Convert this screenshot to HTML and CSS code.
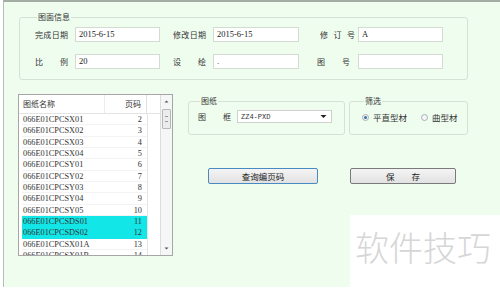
FILE: index.html
```html
<!DOCTYPE html>
<html>
<head>
<meta charset="utf-8">
<link rel="stylesheet" href="styles.css">
</head>
<body>
<div class="window">
  <fieldset class="grp info">
    <legend>图面信息</legend>
    <div class="form">
      <span class="lbl l1 just">完成日期</span><span class="inp">2015-6-15</span>
      <span class="lbl l2 just">修改日期</span><span class="inp">2015-6-15</span>
      <span class="lbl l3 just w35">修订号</span><span class="inp">A</span>
      <span class="lbl l1 just">比例</span><span class="inp">20</span>
      <span class="lbl l2 just">设绘</span><span class="inp">.</span>
      <span class="lbl l3b just">图号</span><span class="inp"></span>
    </div>
  </fieldset>

  <div class="middle">
    <div class="list">
      <div class="table">
        <div class="thead"><span class="c1">图纸名称</span><span class="c2">页码</span><span class="c3"></span></div>
        <div class="row"><span class="c1">066E01CPCSX01</span><span class="c2">2</span><span class="c3"></span></div>
        <div class="row"><span class="c1">066E01CPCSX02</span><span class="c2">3</span><span class="c3"></span></div>
        <div class="row"><span class="c1">066E01CPCSX03</span><span class="c2">4</span><span class="c3"></span></div>
        <div class="row"><span class="c1">066E01CPCSX04</span><span class="c2">5</span><span class="c3"></span></div>
        <div class="row"><span class="c1">066E01CPCSY01</span><span class="c2">6</span><span class="c3"></span></div>
        <div class="row"><span class="c1">066E01CPCSY02</span><span class="c2">7</span><span class="c3"></span></div>
        <div class="row"><span class="c1">066E01CPCSY03</span><span class="c2">8</span><span class="c3"></span></div>
        <div class="row"><span class="c1">066E01CPCSY04</span><span class="c2">9</span><span class="c3"></span></div>
        <div class="row"><span class="c1">066E01CPCSY05</span><span class="c2">10</span><span class="c3"></span></div>
        <div class="row sel"><span class="c1">066E01CPCSDS01</span><span class="c2">11</span><span class="c3"></span></div>
        <div class="row sel"><span class="c1">066E01CPCSDS02</span><span class="c2">12</span><span class="c3"></span></div>
        <div class="row"><span class="c1">066E01CPCSX01A</span><span class="c2">13</span><span class="c3"></span></div>
        <div class="row"><span class="c1">066E01CPCSX01B</span><span class="c2">14</span><span class="c3"></span></div>
      </div>
      <div class="scroll">
        <svg class="arr" width="9" height="9" viewBox="0 0 9 9"><path d="M2.5 5.5 L4.5 3.5 L6.5 5.5 Z" fill="#555"/></svg>
        <div class="thumb"><div class="grip"></div></div>
        <div class="spacer"></div>
        <svg class="arr" width="9" height="9" viewBox="0 0 9 9"><path d="M2.5 3.5 L4.5 5.5 L6.5 3.5 Z" fill="#555"/></svg>
      </div>
    </div>

    <div class="right">
      <div class="groups">
        <fieldset class="grp paper">
          <legend>图纸</legend>
          <div class="prow">
            <span class="lbl just w33">图框</span>
            <div class="combo"><span>ZZ4-PXD</span>
              <svg width="7" height="5" viewBox="0 0 7 5"><path d="M0.5 1 L3.5 4 L6.5 1 Z" fill="#222"/></svg>
            </div>
          </div>
        </fieldset>
        <fieldset class="grp filter">
          <legend>筛选</legend>
          <div class="radios">
            <span class="radio on"></span><span class="rtxt">平直型材</span>
            <span class="radio r2"></span><span class="rtxt">曲型材</span>
          </div>
        </fieldset>
      </div>
      <div class="buttons">
        <button class="btn focus">查询编页码</button>
        <button class="btn save"><span class="just w34">保存</span></button>
      </div>
    </div>
  </div>
</div>
<div class="watermark">软件技巧</div>
</body>
</html>
```
FILE: styles.css
```css
html, body {
  margin: 0;
  padding: 0;
  background: #ffffff;
  width: 500px;
  height: 288px;
  overflow: hidden;
  font-family: "Noto Sans CJK SC", "Liberation Serif", sans-serif;
  color: #222;
}

.window {
  margin-left: 3px;
  height: 275px;
  border-top: 2px solid #a3ada3;
  border-left: 1px solid #b5bfb5;
  background: #effdef;
  padding: 10px 0 0 15px;
}

.grp {
  margin: 0;
  border: 1px solid #d6e0d6;
  border-radius: 3px;
  min-width: 0;
  box-sizing: border-box;
}

.grp legend {
  font-size: 8px;
  line-height: 10px;
  padding: 0 1px;
  margin-left: 2px;
  color: #333;
}

.info {
  width: 449px;
  padding: 5px 0 10px 15px;
}

.form {
  display: grid;
  grid-template-columns: 40px 85px 53px 86px 59px 85px;
  grid-auto-rows: 15px;
  row-gap: 12px;
  align-items: center;
}

.lbl {
  font-size: 8px;
  line-height: 15px;
  color: #333;
}

.just {
  display: inline-block;
  width: 33px;
  text-align: justify;
  text-align-last: justify;
}
.w35 { width: 35px; }
.w33 { width: 33px; }
.w34 { width: 34px; }

.l2 { margin-left: 13px; }
.l3 { margin-left: 21px; }
.l3b { margin-left: 18px; }

.inp {
  height: 15px;
  background: #fff;
  border: 1px solid #d2dcd2;
  box-sizing: border-box;
  font-family: "Liberation Serif", serif;
  font-size: 8.5px;
  line-height: 13px;
  padding-left: 3px;
  color: #222;
}

.middle {
  display: flex;
  margin-top: 14px;
  margin-left: -1px;
}

.list {
  width: 155px;
  height: 162px;
  border: 1px solid #a6a6a6;
  box-sizing: border-box;
  background: #fff;
  display: flex;
  overflow: hidden;
}

.table {
  flex: 1;
  padding-left: 3px;
}

.thead, .row {
  display: grid;
  grid-template-columns: 83px 42px 1fr;
}

.thead {
  height: 19px;
  line-height: 17px;
  font-size: 8px;
  color: #333;
  border-bottom: 1px solid #e4e4e4;
  margin-left: -3px;
  padding-left: 3px;
  box-sizing: border-box;
}
.thead .c1 { border-right: 1px solid #ececec; padding-left: 1px; }
.thead .c2 { border-right: 1px solid #e0e0e0; }

.row {
  height: 11.33px;
  line-height: 11px;
  font-family: "Liberation Serif", serif;
  font-size: 8.3px;
  color: #333;
  box-shadow: inset 0 -1px 0 #f3f3f3;
}

.c1 { padding-left: 1px; white-space: nowrap; overflow: hidden; }
.c2 { text-align: right; padding-right: 5px; }
.row .c3 { border-left: 1px solid #e4e4e4; background: #fff; }

.row.sel .c1, .row.sel .c2 { background: #13e6e6; }

.scroll {
  width: 11px;
  border-left: 1px solid #dcdcdc;
  background: #f6f6f6;
  display: flex;
  flex-direction: column;
  align-items: center;
}
.arr { flex: none; margin-top: 2px; }
.thumb {
  width: 7px;
  height: 18px;
  margin-top: 3px;
  background: #ececec;
  border: 1px solid #b8b8b8;
  border-radius: 1px;
  display: flex;
  align-items: center;
  justify-content: center;
}
.grip { width: 3px; height: 4px; border-top: 1px solid #999; border-bottom: 1px solid #999; }
.spacer { flex: 1; }
.scroll .arr:last-child { margin: 0 0 2px; }

.right {
  margin-left: 15px;
}

.groups {
  display: flex;
  gap: 4px;
  margin-top: 2px;
}

.paper {
  width: 157px;
  height: 39px;
  padding: 3px 0 0 9px;
}

.filter {
  width: 119px;
  height: 39px;
  padding: 5px 0 0 12px;
}

.prow {
  display: flex;
  align-items: center;
  gap: 6px;
}

.combo {
  width: 95px;
  height: 13px;
  box-sizing: border-box;
  background: #fff;
  border: 1px solid #d0d0d0;
  display: flex;
  align-items: center;
  justify-content: space-between;
  padding: 0 4px 0 3px;
  font-family: "Liberation Mono", monospace;
  font-size: 7px;
  color: #333;
}

.radios {
  display: flex;
  align-items: center;
  font-size: 8.5px;
  color: #333;
}
.radio {
  width: 7px;
  height: 7px;
  border-radius: 50%;
  border: 1px solid #a8b0b8;
  background: #f4f6f8;
  box-sizing: border-box;
  margin-right: 4px;
  display: flex;
  align-items: center;
  justify-content: center;
}
.radio.on::after {
  content: "";
  width: 3px;
  height: 3px;
  border-radius: 50%;
  background: #3b6ea8;
}
.radio.r2 { margin-left: 14px; }

.buttons {
  display: flex;
  gap: 32px;
  margin: 33px 0 0 20px;
}

.btn {
  height: 16px;
  padding: 0;
  margin: 0;
  font-family: "Noto Sans CJK SC", sans-serif;
  font-size: 8.5px;
  line-height: 14px;
  color: #222;
  background: linear-gradient(#f4f4f4, #e2e2e2);
  border: 1px solid #7a7a7a;
  border-radius: 2px;
}
.btn.focus { width: 110px; border-color: #4a8ac2; }
.btn.save { width: 106px; }

.watermark {
  position: absolute;
  right: 0;
  bottom: 0;
  width: 150px;
  height: 73px;
  background: #fff;
  box-sizing: border-box;
  padding: 12px 0 0 5px;
  font-family: "Noto Sans CJK SC", sans-serif;
  font-weight: 300;
  font-size: 34px;
  line-height: 40px;
  color: #d6d6d6;
  white-space: nowrap;
}
```
